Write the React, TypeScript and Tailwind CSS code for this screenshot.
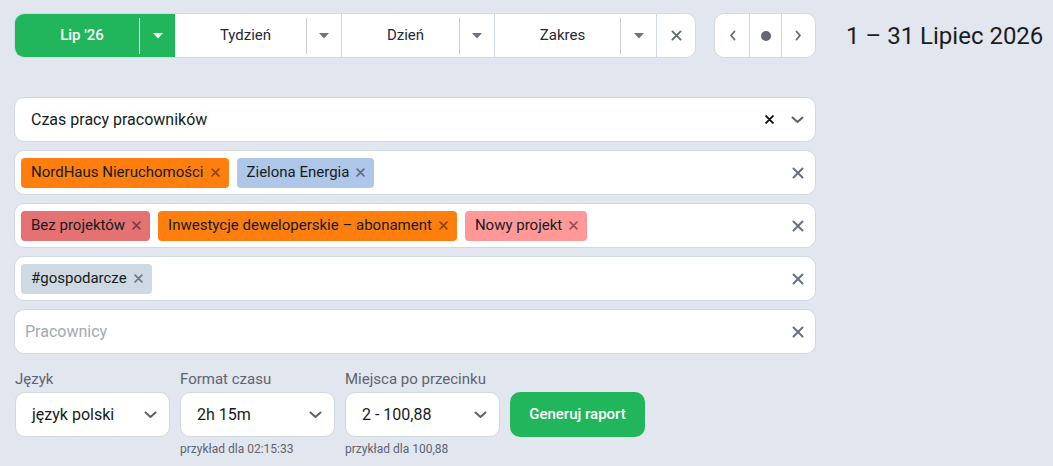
import React from "react";

const font = { fontFamily: "Roboto, 'Noto Sans', sans-serif" };

function Caret({ className = "" }: { className?: string }) {
  return (
    <svg width="10" height="6" viewBox="0 0 10 6" className={className}>
      <path d="M0 0h10L5 5.5z" fill="currentColor" />
    </svg>
  );
}

function Cross({ size = 12, stroke = 2, className = "" }: { size?: number; stroke?: number; className?: string }) {
  return (
    <svg width={size} height={size} viewBox="0 0 12 12" className={className}>
      <path d="M1.5 1.5l9 9M10.5 1.5l-9 9" stroke="currentColor" strokeWidth={stroke} strokeLinecap="round" fill="none" />
    </svg>
  );
}

function ChevronDown({ className = "" }: { className?: string }) {
  return (
    <svg width="13" height="8" viewBox="0 0 13 8" className={className}>
      <path d="M1.5 1.5l5 4.5 5-4.5" stroke="currentColor" strokeWidth="2" strokeLinecap="round" strokeLinejoin="round" fill="none" />
    </svg>
  );
}

function Segment({ label, width, caretAt }: { label: string; width: string; caretAt: string }) {
  return (
    <div className={`flex items-center h-full border-l border-[#d3d9e1] ${width}`}>
      <div className="flex-1 pl-[10px] text-center text-[15px] text-[#1f2937]">{label}</div>
      <div className="w-px h-[36px] bg-[#c9ced6]" />
      <div className={`${caretAt} flex justify-center text-[#6b7480]`}>
        <Caret />
      </div>
    </div>
  );
}

type Tag = { label: string; bg: string };

function TagRow({ tags }: { tags: Tag[] }) {
  return (
    <div className="h-[45px] bg-white rounded-[10px] border border-[#d2d8e0] flex items-center pl-[6px] pr-[11px]">
      <div className="flex-1 flex items-center gap-[8px]">
        {tags.map((t) => (
          <div key={t.label} className={`h-[30px] rounded-[4px] flex items-center pl-[10px] pr-[9px] gap-[7px] text-[15px] text-[#161b22] ${t.bg}`}>
            <span>{t.label}</span>
            <Cross size={9} stroke={2.2} className="text-black/45" />
          </div>
        ))}
      </div>
      <Cross size={12} stroke={2} className="text-[#66717e]" />
    </div>
  );
}

function SelectBox({ label, value, hint }: { label: string; value: string; hint?: string }) {
  return (
    <div className="flex flex-col w-[155px]">
      <div className="text-[15px] text-[#5d6470] h-[24px] leading-[24px] mb-[1px]">{label}</div>
      <div className="h-[45px] bg-white rounded-[10px] border border-[#d2d8e0] flex items-center pl-[16px] pr-[12px]">
        <span className="flex-1 text-[16px] text-[#161b22]">{value}</span>
        <ChevronDown className="text-[#5b626c]" />
      </div>
      {hint && <div className="text-[12px] text-[#5d6470] mt-[3px]">{hint}</div>}
    </div>
  );
}

export default function App() {
  return (
    <div style={font} className="w-[1053px] h-[466px] bg-[#e2e6ee] pt-[13px] pl-[14px] overflow-hidden">
      {/* toolbar */}
      <div className="flex items-center h-[45px]">
        <div className="flex items-center h-full w-[682px] rounded-[10px] bg-white border border-[#d3d9e1] overflow-hidden">
          <div className="flex items-center h-full w-[160px] bg-[#21b65c] text-white">
            <div className="flex-1 pl-[10px] text-center text-[15px] font-medium">Lip '26</div>
            <div className="w-px h-[36px] bg-white" />
            <div className="w-[35px] flex justify-center">
              <Caret />
            </div>
          </div>
          <div className="flex items-center h-full w-[166px]">
            <div className="flex-1 pl-[10px] text-center text-[15px] text-[#1f2937]">Tydzień</div>
            <div className="w-px h-[36px] bg-[#c9ced6]" />
            <div className="w-[34px] flex justify-center text-[#6b7480]">
              <Caret />
            </div>
          </div>
          <Segment label="Dzień" width="w-[153px]" caretAt="w-[34px]" />
          <Segment label="Zakres" width="w-[162px]" caretAt="w-[35px]" />
          <div className="flex-1 h-full border-l border-[#d3d9e1] flex items-center justify-center text-[#5f6873]">
            <Cross size={11} stroke={2} />
          </div>
        </div>

        <div className="ml-[18px] flex items-center h-full w-[102px] rounded-[10px] bg-white border border-[#d3d9e1] overflow-hidden text-[#5f6873]">
          <div className="w-[34px] h-full flex items-center justify-center">
            <svg width="7" height="11" viewBox="0 0 7 11"><path d="M5.5 1.5L2 5.5l3.5 4" stroke="currentColor" strokeWidth="1.8" fill="none" strokeLinecap="round" strokeLinejoin="round" /></svg>
          </div>
          <div className="w-[33px] h-full border-x border-[#d3d9e1] flex items-center justify-center">
            <div className="w-[10px] h-[10px] rounded-full bg-[#5f6873]" />
          </div>
          <div className="flex-1 h-full flex items-center justify-center">
            <svg width="7" height="11" viewBox="0 0 7 11"><path d="M1.5 1.5L5 5.5l-3.5 4" stroke="currentColor" strokeWidth="1.8" fill="none" strokeLinecap="round" strokeLinejoin="round" /></svg>
          </div>
        </div>

        <div className="ml-[30px] text-[24px] text-[#1a1d22]">1 – 31 Lipiec 2026</div>
      </div>

      {/* filters */}
      <div className="w-[802px] mt-[39px] flex flex-col gap-[8px]">
        <div className="h-[45px] bg-white rounded-[10px] border border-[#d2d8e0] flex items-center pl-[16px] pr-[11px]">
          <span className="flex-1 text-[16px] text-[#161b22]">Czas pracy pracowników</span>
          <Cross size={9} stroke={2.6} className="text-[#111] mr-[17px]" />
          <ChevronDown className="text-[#5b626c]" />
        </div>
        <TagRow
          tags={[
            { label: "NordHaus Nieruchomości", bg: "bg-[#ff7f0e]" },
            { label: "Zielona Energia", bg: "bg-[#aec7e8]" },
          ]}
        />
        <TagRow
          tags={[
            { label: "Bez projektów", bg: "bg-[#e47272]" },
            { label: "Inwestycje deweloperskie – abonament", bg: "bg-[#ff7f0e]" },
            { label: "Nowy projekt", bg: "bg-[#ff9896]" },
          ]}
        />
        <TagRow tags={[{ label: "#gospodarcze", bg: "bg-[#cfd9e3]" }]} />
        <div className="h-[45px] bg-white rounded-[10px] border border-[#d2d8e0] flex items-center pl-[10px] pr-[11px]">
          <span className="flex-1 text-[16px] text-[#a3a9b2]">Pracownicy</span>
          <Cross size={12} stroke={2} className="text-[#66717e]" />
        </div>
      </div>

      {/* settings */}
      <div className="flex items-start gap-[10px] mt-[13px] ml-[1px]">
        <SelectBox label="Język" value="język polski" />
        <SelectBox label="Format czasu" value="2h 15m" hint="przykład dla 02:15:33" />
        <SelectBox label="Miejsca po przecinku" value="2 - 100,88" hint="przykład dla 100,88" />
        <button className="mt-[25px] h-[45px] w-[135px] rounded-[10px] bg-[#21b65c] text-white text-[15px] font-medium">
          Generuj raport
        </button>
      </div>
    </div>
  );
}
